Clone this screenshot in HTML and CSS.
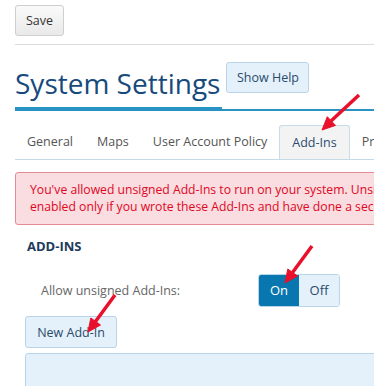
FILE: index.html
```html
<!DOCTYPE html>
<html>
    <head>
        <link rel="stylesheet" href="styles.css">
    </head>
    <body>
        <div class="page">
            <div class="toolbar">
                <button class="btn btn-save">Save</button>
            </div>
            <div class="title-row">
                <h1 class="title">System Settings</h1>
                <button class="btn btn-help">Show Help</button>
            </div>
            <ul class="tabs">
                <li class="tab">General</li>
                <li class="tab">Maps</li>
                <li class="tab">User Account Policy</li>
                <li class="tab active">Add-Ins</li>
                <li class="tab">Privacy</li>
            </ul>
            <div class="alert">
                You've allowed unsigned Add-Ins to run on your system. Unsigned Add-Ins should be<br>
                enabled only if you wrote these Add-Ins and have done a security review.
            </div>
            <section class="addins">
                <h3 class="section-title">ADD-INS</h3>
                <div class="setting">
                    <span class="setting-label">Allow unsigned Add-Ins:</span>
                    <div class="toggle">
                        <span class="toggle-opt on">On</span>
                        <span class="toggle-opt">Off</span>
                    </div>
                </div>
                <button class="btn btn-new">New Add-In</button>
                <div class="addin-list"></div>
            </section>
        </div>

        <svg class="arrows" width="374" height="386" viewBox="0 0 374 386">
            <g fill="#e8102a" stroke="#e8102a">
                <line x1="359" y1="95" x2="331" y2="121" stroke-width="3.5"/>
                <polygon points="322,130 335.5,125.4 327.3,116.7" stroke-width="1"/>
                <line x1="312" y1="246" x2="292.5" y2="272.5" stroke-width="3.5"/>
                <polygon points="285,283 297.5,276 287.8,269" stroke-width="1"/>
                <line x1="115" y1="295" x2="95.5" y2="321.5" stroke-width="3.5"/>
                <polygon points="88,332 100.5,325 90.8,318" stroke-width="1"/>
            </g>
        </svg>
    </body>
</html>
```

FILE: styles.css
```css
body {
    margin: 0;
    font-family: "Open Sans", "Noto Sans", sans-serif;
    background-color: white;
    overflow: hidden;
    width: 374px;
    height: 386px;
    position: relative;
}
.page {
    width: 620px;
    padding: 5px 0 0 15px;
}
.btn {
    font-family: "Open Sans", "Noto Sans", sans-serif;
    font-size: 12.5px;
    border-radius: 3px;
    cursor: pointer;
    padding: 0;
}
.toolbar {
    padding-bottom: 8px;
    border-bottom: 1px solid #dcdcdc;
}
.btn-save {
    width: 49px;
    height: 31px;
    color: #333;
    background: linear-gradient(#fafafa, #e9e9e9);
    border: 1px solid #cfcfcf;
}
.title-row {
    display: flex;
    align-items: center;
    margin-top: 14px;
    border-bottom: 2px solid #2a93c6;
}
.title {
    margin: 0 0 -2px 0;
    font-size: 28px;
    font-weight: normal;
    color: #174a7c;
    line-height: 48px;
    white-space: nowrap;
    padding-right: 2px;
    border-bottom: 4px solid #2a93c6;
}
.btn-help {
    width: 83px;
    height: 31px;
    margin: 0 0 13px 4px;
    color: #2a4a6a;
    background-color: #e4f1fb;
    border: 1px solid #b7d4ea;
}
.tabs {
    list-style: none;
    margin: 14px 0 0 0;
    padding: 0;
    display: flex;
    border-bottom: 1px solid #c4dbe7;
    height: 34px;
}
.tab {
    padding: 0 12px;
    line-height: 34px;
    font-size: 12.5px;
    color: #555;
    white-space: nowrap;
}
.tab.active {
    background-color: #f3f3f3;
    border: 1px solid #c4dde9;
    border-bottom: none;
    border-radius: 3px 3px 0 0;
    color: #2a4c6e;
    line-height: 33px;
    height: 34px;
    box-sizing: border-box;
}
.alert {
    margin-top: 12px;
    padding: 8px 14px 9px;
    background-color: #f9dde0;
    border: 1px solid #e58b96;
    border-radius: 3px;
    color: #e0061f;
    font-size: 12.2px;
    line-height: 17px;
    white-space: nowrap;
}
.addins {
    padding: 12px 0 0 10px;
}
.section-title {
    margin: 0 0 0 2px;
    font-size: 13px;
    font-weight: bold;
    color: #1c3a5c;
    line-height: 18px;
}
.setting {
    display: flex;
    align-items: center;
    margin-top: 19px;
}
.setting-label {
    width: 233px;
    padding-left: 16px;
    box-sizing: border-box;
    font-size: 12.5px;
    color: #666;
}
.toggle {
    display: flex;
    border: 1px solid #b7d6ea;
    border-radius: 3px;
    overflow: hidden;
    height: 31px;
}
.toggle-opt {
    width: 40px;
    line-height: 31px;
    text-align: center;
    font-size: 13px;
    color: #2a4a6a;
    background-color: #e4f1fb;
}
.toggle-opt.on {
    background-color: #0877af;
    color: white;
}
.btn-new {
    display: block;
    margin-top: 9px;
    width: 92px;
    height: 32px;
    color: #2a4a6a;
    background-color: #e4f1fb;
    border: 1px solid #b7d4ea;
}
.addin-list {
    margin-top: 5px;
    height: 40px;
    background-color: #e4f1fb;
    border: 1px solid #b7d4ea;
    border-radius: 3px;
}
.arrows {
    position: absolute;
    top: 0;
    left: 0;
}
```
